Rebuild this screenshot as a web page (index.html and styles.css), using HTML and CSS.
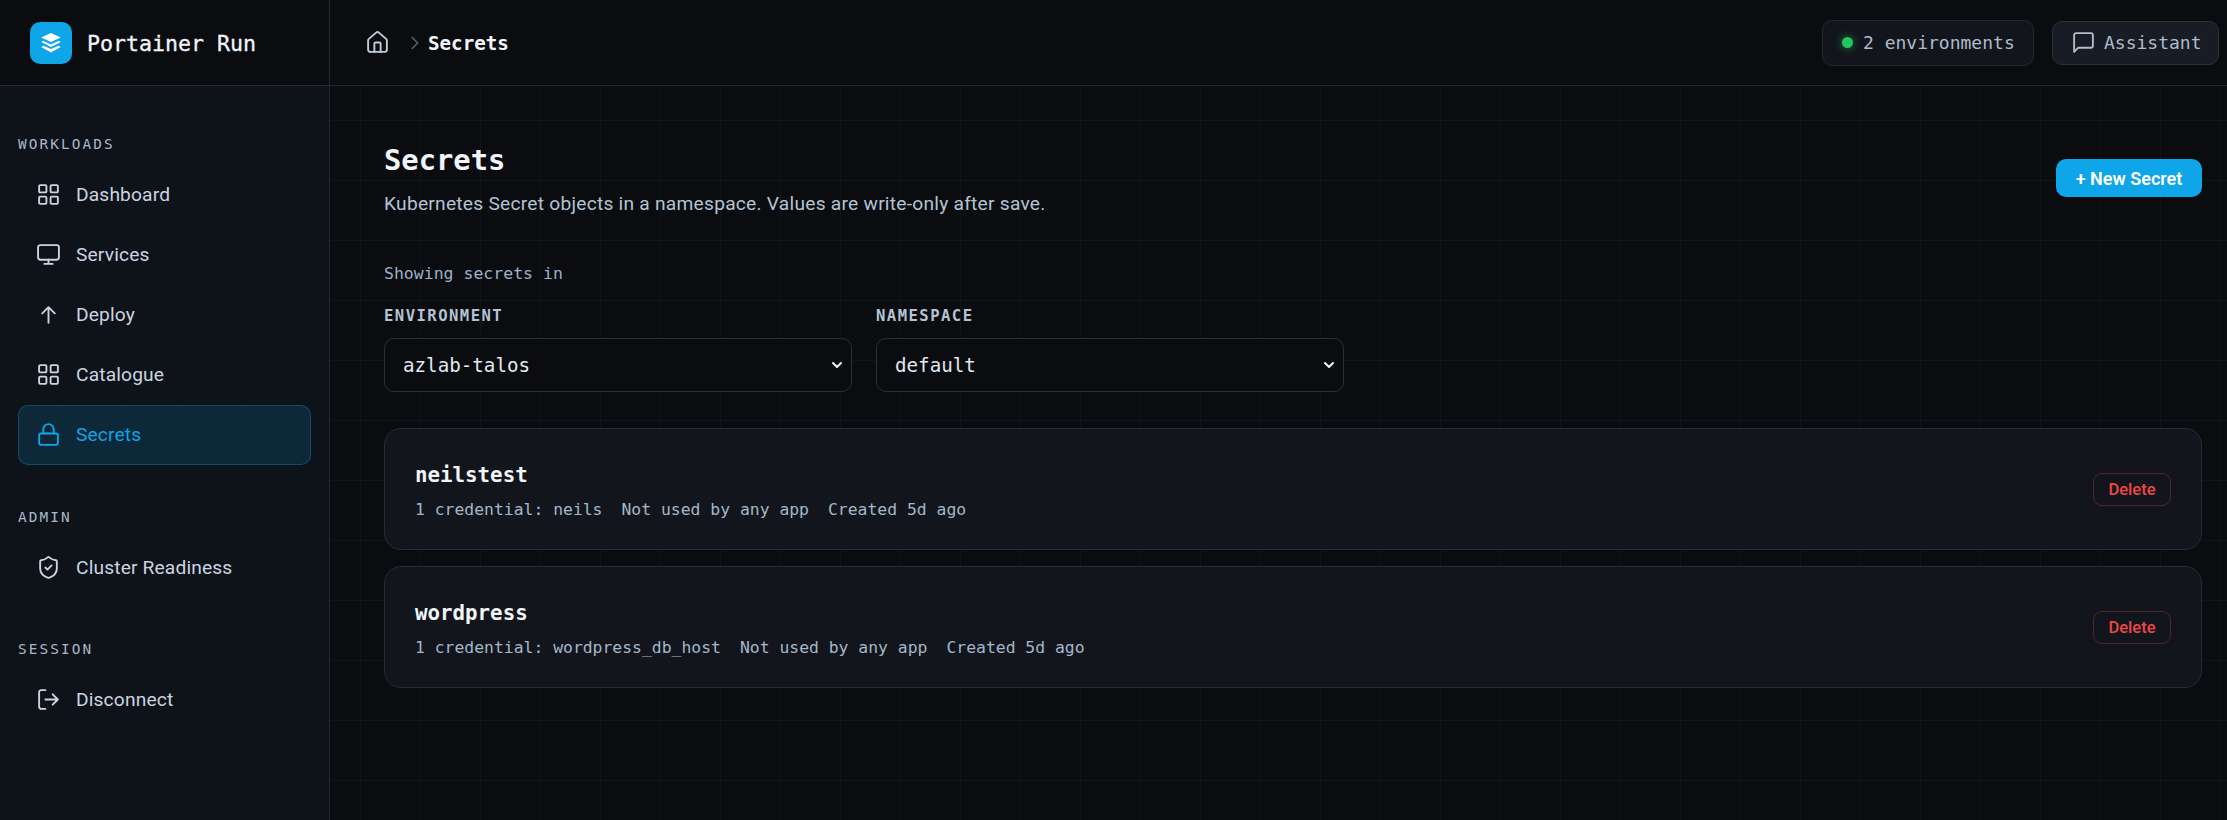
FILE: index.html
```html
<!DOCTYPE html>
<html lang="en">
<head>
<meta charset="utf-8">
<title>Portainer Run - Secrets</title>
<link rel="stylesheet" href="styles.css">
</head>
<body>
<div class="app">
  <header class="topbar">
    <div class="brand">
      <span class="logo">
        <svg viewBox="0 0 24 24" width="24" height="24" fill="#fff"><path d="M12 2l9.800 4.500L12 11 2.200 6.500z"/><path d="M4 9.800L12 13.500l8-3.700 1.800 1.200L12 16 2.200 11z"/><path d="M4.500 14.800L12 18l7.500-3.200 2.300 1.200L12 21.500 2.200 16z"/></svg>
      </span>
      <span class="brand-name">Portainer Run</span>
    </div>
    <nav class="crumbs">
      <svg class="home" viewBox="0 0 24 24" width="25" height="25"><path d="M15 21v-8a1 1 0 0 0-1-1h-4a1 1 0 0 0-1 1v8"/><path d="M3 10a2 2 0 0 1 .7-1.500l7-6a2 2 0 0 1 2.600 0l7 6a2 2 0 0 1 .7 1.500v9a2 2 0 0 1-2 2H5a2 2 0 0 1-2-2z"/></svg>
      <svg class="chev" viewBox="0 0 24 24" width="18" height="18"><path d="M9 4l8 8-8 8"/></svg>
      <span class="crumb-current">Secrets</span>
    </nav>
    <div class="top-actions">
      <div class="env-pill"><span class="dot"></span>2 environments</div>
      <button class="assistant">
        <svg class="icon" viewBox="0 0 24 24"><path d="M21 15a2 2 0 0 1-2 2H7l-4 4V5a2 2 0 0 1 2-2h14a2 2 0 0 1 2 2z"/></svg>
        Assistant
      </button>
    </div>
  </header>
  <div class="body">
    <aside class="sidebar">
      <section class="nav-group">
        <h2 class="nav-label">WORKLOADS</h2>
        <a class="nav-item"><svg class="icon" viewBox="0 0 24 24"><rect x="3" y="3" width="7" height="7" rx="1"/><rect x="14" y="3" width="7" height="7" rx="1"/><rect x="3" y="14" width="7" height="7" rx="1"/><rect x="14" y="14" width="7" height="7" rx="1"/></svg>Dashboard</a>
        <a class="nav-item"><svg class="icon" viewBox="0 0 24 24"><rect x="2" y="3" width="20" height="14" rx="2"/><path d="M8 21h8M12 17v4"/></svg>Services</a>
        <a class="nav-item"><svg class="icon" viewBox="0 0 24 24"><path d="M12 20V5M6 11l6-6 6 6"/></svg>Deploy</a>
        <a class="nav-item"><svg class="icon" viewBox="0 0 24 24"><rect x="3" y="3" width="7" height="7" rx="1"/><rect x="14" y="3" width="7" height="7" rx="1"/><rect x="3" y="14" width="7" height="7" rx="1"/><rect x="14" y="14" width="7" height="7" rx="1"/></svg>Catalogue</a>
        <a class="nav-item active"><svg class="icon" viewBox="0 0 24 24"><rect x="3" y="11" width="18" height="11" rx="2"/><path d="M7 11V7a5 5 0 0 1 10 0v4"/></svg>Secrets</a>
      </section>
      <section class="nav-group">
        <h2 class="nav-label">ADMIN</h2>
        <a class="nav-item"><svg class="icon" viewBox="0 0 24 24"><path d="M20 13c0 5-3.500 7.500-7.660 8.950a1 1 0 0 1-.670-.010C7.500 20.500 4 18 4 13V6a1 1 0 0 1 1-1c2 0 4.500-1.200 6.240-2.720a1.170 1.170 0 0 1 1.520 0C14.510 3.810 17 5 19 5a1 1 0 0 1 1 1z"/><path d="M9 12l2 2 4-4"/></svg>Cluster Readiness</a>
      </section>
      <section class="nav-group">
        <h2 class="nav-label">SESSION</h2>
        <a class="nav-item"><svg class="icon" viewBox="0 0 24 24"><path d="M9 21H5a2 2 0 0 1-2-2V5a2 2 0 0 1 2-2h4"/><path d="M16 17l5-5-5-5M21 12H9"/></svg>Disconnect</a>
      </section>
    </aside>
    <main class="main">
      <div class="page-head">
        <div>
          <h1 class="page-title">Secrets</h1>
          <p class="page-sub">Kubernetes Secret objects in a namespace. Values are write-only after save.</p>
        </div>
        <button class="primary">+ New Secret</button>
      </div>
      <p class="showing">Showing secrets in</p>
      <div class="filters">
        <label class="field"><span class="field-label">ENVIRONMENT</span>
          <span class="select-wrap">
            <select class="select"><option>azlab-talos</option></select>
            <svg class="select-chev" viewBox="0 0 12 12" width="12" height="12"><path d="M2 4l4 4 4-4"/></svg>
          </span>
        </label>
        <label class="field"><span class="field-label">NAMESPACE</span>
          <span class="select-wrap">
            <select class="select"><option>default</option></select>
            <svg class="select-chev" viewBox="0 0 12 12" width="12" height="12"><path d="M2 4l4 4 4-4"/></svg>
          </span>
        </label>
      </div>
      <div class="cards">
        <article class="card">
          <div class="card-text">
            <h3 class="card-title">neilstest</h3>
            <div class="card-meta"><span>1 credential: neils</span><span>Not used by any app</span><span>Created 5d ago</span></div>
          </div>
          <button class="danger">Delete</button>
        </article>
        <article class="card">
          <div class="card-text">
            <h3 class="card-title">wordpress</h3>
            <div class="card-meta"><span>1 credential: wordpress_db_host</span><span>Not used by any app</span><span>Created 5d ago</span></div>
          </div>
          <button class="danger">Delete</button>
        </article>
      </div>
    </main>
  </div>
</div>
</body>
</html>
```
FILE: styles.css
```css
* { box-sizing: border-box; }
html, body { margin: 0; height: 100%; }
body {
  color-scheme: dark;
  background-color: #0a0c10;
  background-image:
    linear-gradient(to right, #111419 1px, transparent 1px),
    linear-gradient(to bottom, #111419 1px, transparent 1px);
  background-size: 60px 60px;
  color: #f1f5f9;
  font-family: "Roboto", "Liberation Sans", sans-serif;
  overflow: hidden;
}
h1, h2, h3, p { margin: 0; }
svg { display: block; flex: none; }
.icon { width: 25px; height: 25px; fill: none; stroke: currentColor; stroke-width: 1.800; stroke-linecap: round; stroke-linejoin: round; }
.app { display: flex; flex-direction: column; height: 820px; }

.topbar { height: 86px; flex: none; display: flex; align-items: center; background: #0a0c10; border-bottom: 1px solid #232730; padding-right: 8px; }
.brand { width: 330px; height: 100%; display: flex; align-items: center; gap: 15px; padding-left: 30px; border-right: 1px solid #232730; }
.logo { width: 42px; height: 42px; border-radius: 10px; background: #0ea5e9; display: flex; align-items: center; justify-content: center; }
.brand-name { font: 400 21.6px "DejaVu Sans Mono", monospace; -webkit-text-stroke: .3px #f1f5f9; color: #f1f5f9; position: relative; top: 1px; }
.crumbs { display: flex; align-items: center; margin-left: 35px; flex: 1; }
.home { fill: none; stroke: #c3cdd9; stroke-width: 1.800; stroke-linecap: round; stroke-linejoin: round; }
.chev { fill: none; stroke: #566172; stroke-width: 2; margin-left: 15px; }
.crumb-current { font: 700 19.2px "DejaVu Sans Mono", monospace; margin-left: 5px; color: #f1f5f9; position: relative; top: 1px; }
.top-actions { display: flex; align-items: center; gap: 18px; font: 400 18px "DejaVu Sans Mono", monospace; }
.env-pill { height: 46px; width: 212px; padding-left: 19px; display: flex; align-items: center; gap: 10px; background: #12161c; border: 1px solid #232831; border-radius: 10px; color: #aebccd; }
.dot { width: 11px; height: 11px; border-radius: 50%; background: #22c55e; box-shadow: 0 0 8px rgba(34,197,94,.6); }
.assistant { height: 44px; width: 167px; padding: 0 0 0 18px; display: flex; align-items: center; gap: 8px; background: #181d25; border: 1px solid #2a303b; border-radius: 10px; color: #aebccd; font: inherit; }

.body { flex: 1; display: flex; min-height: 0; }
.sidebar { width: 330px; flex: none; padding: 47px 18px 0; background: rgba(15,19,26,.93); border-right: 1px solid #232730; display: flex; flex-direction: column; gap: 41px; }
.nav-label { font: 400 14.4px/22px "DejaVu Sans Mono", monospace; letter-spacing: 2.100px; color: #a8b8ca; margin-bottom: 9.500px; }
.nav-item { height: 60px; display: flex; align-items: center; gap: 15px; padding-left: 17px; font-size: 19.2px; letter-spacing: .15px; color: #cbd5e1; border: 1px solid transparent; border-radius: 10px; }
.nav-item.active { color: #0ea5e9; background: rgba(14,165,233,.15); border-color: rgba(14,165,233,.3); }

.main { flex: 1; min-width: 0; padding: 55px 25px 0 54px; }
.page-head { display: flex; justify-content: space-between; align-items: center; }
.page-title { font: 700 28.8px/38px "DejaVu Sans Mono", monospace; color: #f1f5f9; }
.page-sub { font-size: 19.2px; letter-spacing: .24px; line-height: 28px; color: #b4c3d4; margin-top: 11px; }
.primary { height: 38px; width: 146px; background: #0ea5e9; color: #fff; border: 0; border-radius: 10px; font: 600 18px "Roboto", sans-serif; margin-bottom: 3px; }
.showing { font: 400 16.5px/22px "DejaVu Sans Mono", monospace; color: #9fb2c6; margin-top: 45px; }
.filters { display: flex; gap: 24px; margin-top: 21px; }
.field { display: flex; flex-direction: column; gap: 12px; width: 468px; }
.field-label { font: 700 15.6px/20px "DejaVu Sans Mono", monospace; letter-spacing: 1.440px; color: #b4c3d4; }
.select-wrap { position: relative; display: block; }
.select { display: block; width: 100%; height: 54px; padding: 0 18px; appearance: none; background: #0a0c10; color: #e2e8f0; border: 1px solid #2a303b; border-radius: 10px; font: 400 19.2px "DejaVu Sans Mono", monospace; }
.select-chev { position: absolute; right: 9px; top: 21px; fill: none; stroke: #f1f5f9; stroke-width: 2; stroke-linecap: round; stroke-linejoin: round; pointer-events: none; }
.cards { display: flex; flex-direction: column; gap: 16px; margin-top: 36px; }
.card { height: 122px; display: flex; justify-content: space-between; align-items: center; padding: 0 30px; background: #12161c; border: 1px solid #262c36; border-radius: 17px; }
.card-text { padding-top: 3px; }
.card-title { font: 700 20.8px/28px "DejaVu Sans Mono", monospace; color: #f1f5f9; }
.card-meta { display: flex; gap: 19px; font: 400 16.4px/22px "DejaVu Sans Mono", monospace; color: #a4b6c9; margin-top: 10px; }
.danger { width: 78px; height: 33px; padding: 0; background: transparent; color: #f04646; border: 1px solid rgba(239,68,68,.3); border-radius: 9px; font: 500 16.5px "Roboto", sans-serif; }
```
